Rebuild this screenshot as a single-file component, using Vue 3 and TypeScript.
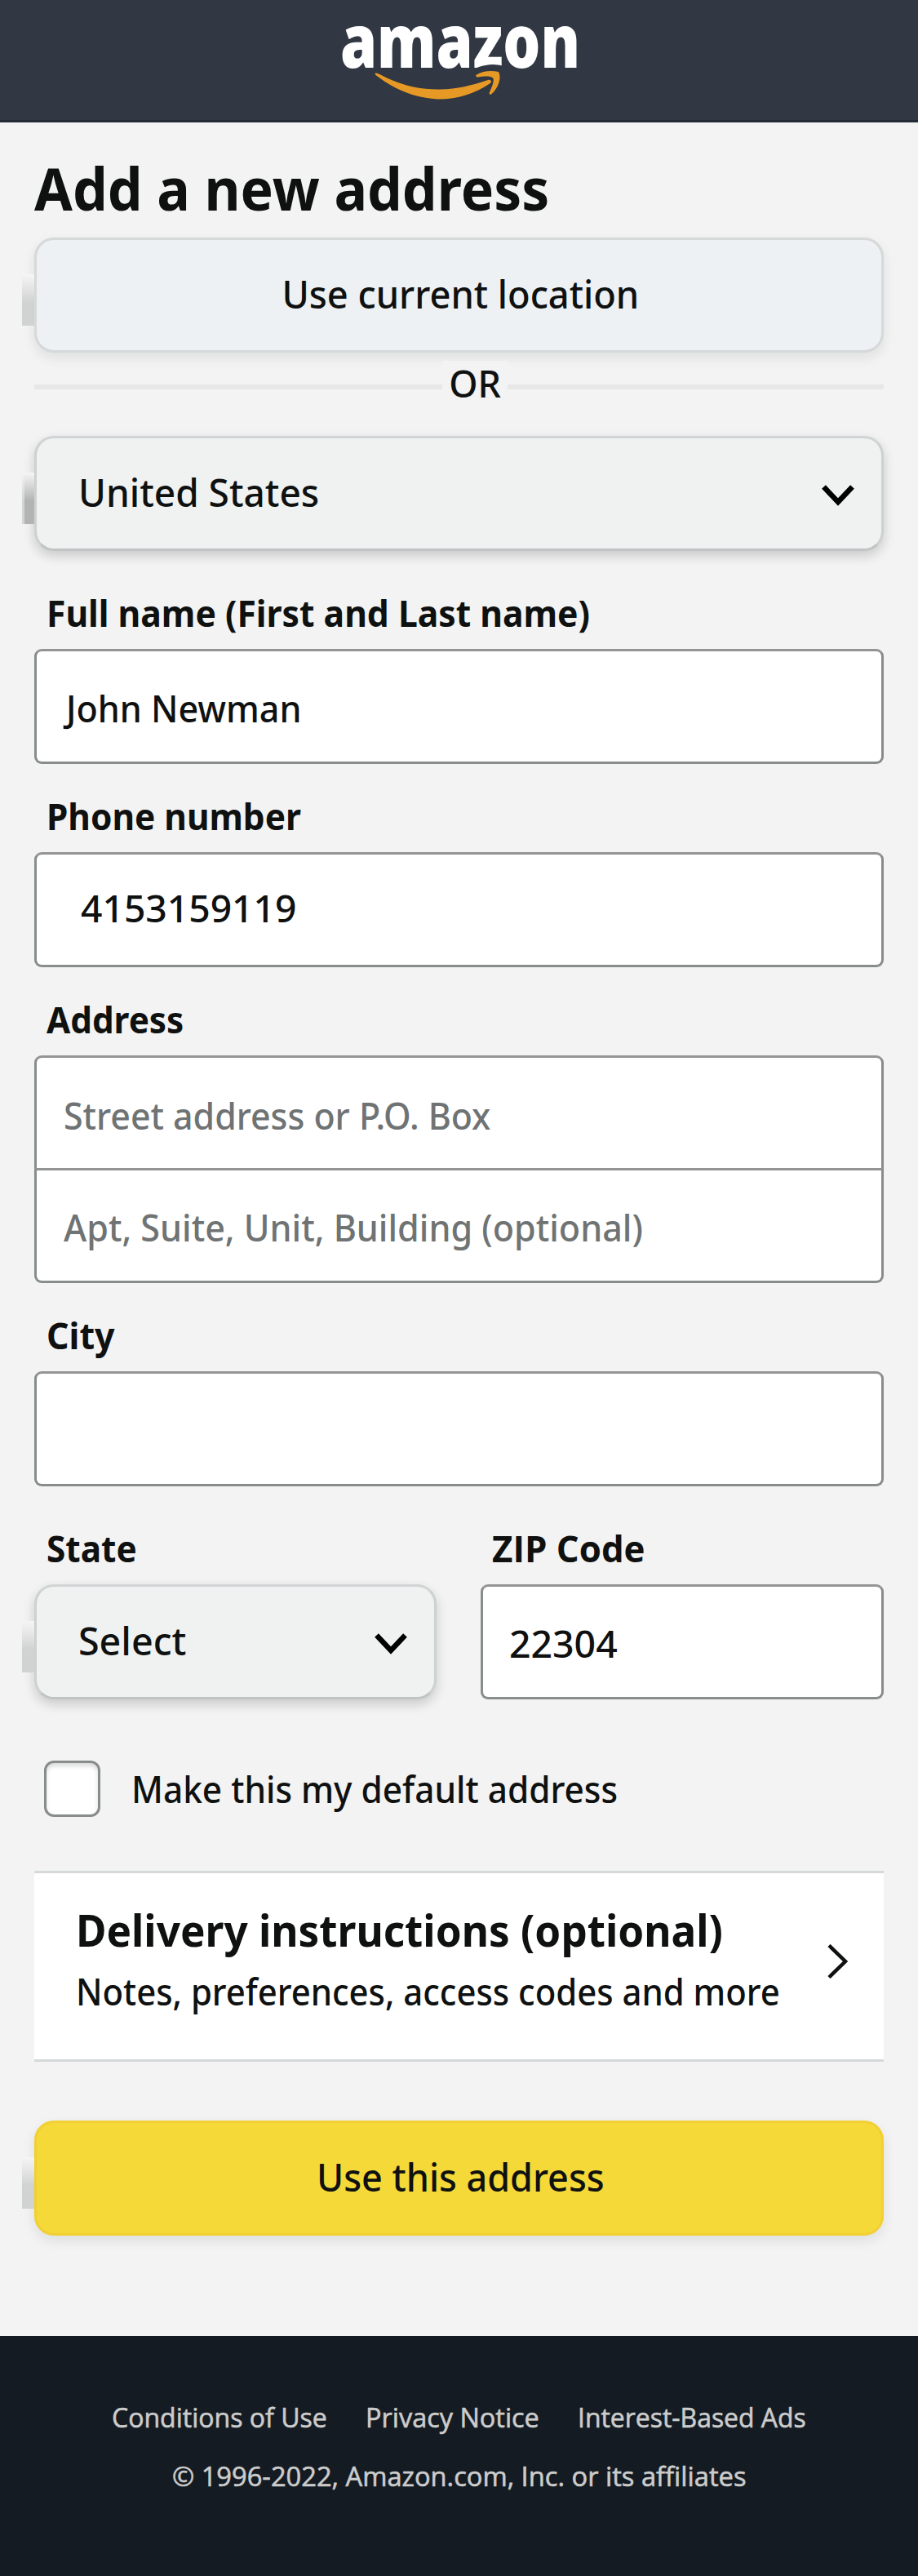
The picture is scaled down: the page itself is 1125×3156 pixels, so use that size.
<script setup lang="ts">
import type { Directive } from 'vue'

// Condenses or widens a run of text so that it takes up exactly the given width.
const vFit: Directive<HTMLElement, number> = {
  mounted(el, { value }) {
    el.style.transform = `scaleX(${value / el.offsetWidth})`
  },
}

interface FooterLink {
  label: string
  width: number
}

const footerLinks: FooterLink[] = [
  { label: 'Conditions of Use', width: 264 },
  { label: 'Privacy Notice', width: 213 },
  { label: 'Interest-Based Ads', width: 280 },
]
</script>

<template>
  <div class="page">
    <header class="header">
      <svg class="logo" width="310" height="147" viewBox="-5 0 310 147" role="img" aria-label="amazon">
        <text x="5" y="83" textLength="294" lengthAdjust="spacingAndGlyphs" class="logo-word">amazon</text>
        <path d="M174 84.500 Q192 78 208 84" fill="none" stroke="#313743" stroke-width="4" />
        <g transform="translate(2 0)" fill="#e69925">
          <path
            d="M49 90 C76 104 98 110 125 109.500 C147 109 163 105 184 98 C187 97 190 100 186 102.500 C168 115 145 122 122 121.500 C92 120 67 108 46.500 92 C44.500 90.500 46 88.500 49 90Z"
          />
          <path
            d="M170 91.500 C178 87 187 86 197 88 C201 95 197 108 188 115.500 C186 116.500 185 115 186 113 C190 104 192 98 190 95.500 C187 93 180 93 172 94.500 C169 94.500 168.500 92.500 170 91.500Z"
          />
        </g>
      </svg>
    </header>

    <main class="content">
      <h1 class="title"><span v-fit="631" class="fit">Add a new address</span></h1>

      <div class="button location"><span v-fit="438" class="fit center">Use current location</span></div>

      <div class="divider"><span class="divider-text"><span v-fit="64" class="fit center">OR</span></span></div>

      <div class="button select strong">
        <span v-fit="295" class="fit">United States</span>
        <svg class="chevron" width="42" height="28" viewBox="0 0 42 28"><path d="M3.500 3.500 L21 22 L38.500 3.500" /></svg>
      </div>

      <section class="field first">
        <div class="label"><span v-fit="666" class="fit">Full name (First and Last name)</span></div>
        <div class="input name"><span v-fit="288" class="fit">John Newman</span></div>
      </section>

      <section class="field">
        <div class="label"><span v-fit="312" class="fit">Phone number</span></div>
        <div class="input phone"><span v-fit="264" class="fit">4153159119</span></div>
      </section>

      <section class="field">
        <div class="label"><span v-fit="168" class="fit">Address</span></div>
        <div class="input top placeholder"><span v-fit="523" class="fit">Street address or P.O. Box</span></div>
        <div class="input bottom placeholder"><span v-fit="710" class="fit">Apt, Suite, Unit, Building (optional)</span></div>
      </section>

      <section class="field">
        <div class="label"><span v-fit="84" class="fit">City</span></div>
        <div class="input"></div>
      </section>

      <div class="columns">
        <section class="column state">
          <div class="label"><span v-fit="111" class="fit">State</span></div>
          <div class="button select">
            <span v-fit="132" class="fit">Select</span>
            <svg class="chevron" width="42" height="28" viewBox="0 0 42 28"><path d="M3.500 3.500 L21 22 L38.500 3.500" /></svg>
          </div>
        </section>
        <section class="column zip">
          <div class="label"><span v-fit="188" class="fit">ZIP Code</span></div>
          <div class="input"><span v-fit="133" class="fit">22304</span></div>
        </section>
      </div>

      <div class="default-row">
        <span class="checkbox"></span>
        <span v-fit="596" class="fit">Make this my default address</span>
      </div>

      <section class="instructions">
        <div class="instructions-text">
          <h2 class="instructions-title"><span v-fit="793" class="fit">Delivery instructions (optional)</span></h2>
          <p class="instructions-note"><span v-fit="863" class="fit">Notes, preferences, access codes and more</span></p>
        </div>
        <svg class="arrow" width="26" height="42" viewBox="0 0 26 42"><path d="M2 1.500 L22 21 L2 40.500" /></svg>
      </section>

      <div class="button submit"><span v-fit="353" class="fit center">Use this address</span></div>
    </main>

    <footer class="footer">
      <nav class="footer-links">
        <span v-for="link in footerLinks" :key="link.label" class="footer-link" :style="{ width: link.width + 'px' }">
          <span v-fit="link.width" class="fit">{{ link.label }}</span>
        </span>
      </nav>
      <div class="copyright"><span v-fit="703" class="fit center">© 1996-2022, Amazon.com, Inc. or its affiliates</span></div>
    </footer>
  </div>
</template>

<style>
body {
  background: #f3f3f3;
}
</style>

<style scoped>
.page {
  width: 1125px;
  height: 3156px;
  overflow: hidden;
  display: flex;
  flex-direction: column;
  background: #f3f3f3;
  color: #0f1111;
  font: 500 45px/60px 'Noto Sans', 'Open Sans', sans-serif;
}

.fit {
  display: inline-block;
  flex: none;
  white-space: nowrap;
  transform-origin: left center;
}

.fit.center {
  transform-origin: center;
}

.header {
  box-sizing: border-box;
  height: 150px;
  padding-right: 1px;
  display: flex;
  justify-content: center;
  background: #313743;
  border-bottom: 3px solid #232936;
}

.logo-word {
  font: 800 91px 'Open Sans', sans-serif;
  fill: #fff;
}

.content {
  flex: 1;
  padding: 44px 42px 0;
}

.title {
  margin: 0 0 25px;
  font-size: 72px;
  font-weight: 700;
  line-height: 72px;
}

.button {
  position: relative;
  box-sizing: border-box;
  height: 141px;
  padding: 0 0 4px 3px;
  display: flex;
  align-items: center;
  justify-content: center;
  border: 3px solid #d5d9d9;
  border-radius: 24px;
  box-shadow: 0 6px 15px rgba(15, 17, 17, 0.09);
  font-size: 48px;
}

/* Short shaded tab that sticks out of the left edge. */
.button::before {
  content: '';
  position: absolute;
  top: 42px;
  left: -18px;
  width: 15px;
  height: 63px;
  background: linear-gradient(#f5f5f5, #d1d3d2 55%);
}

.location {
  background: #edf1f3;
}

.divider {
  position: relative;
  height: 54px;
  margin: 10px 0 38px;
  display: flex;
  align-items: center;
  line-height: 56px;
  background: linear-gradient(#e7e7e7, #e7e7e7) 0 29px / 100% 6px no-repeat;
}

.divider-text {
  width: 80px;
  height: 54px;
  margin-left: 500px;
  display: flex;
  justify-content: center;
  background: #f3f3f3;
}

.select {
  padding-left: 51px;
  padding-right: 32px;
  justify-content: space-between;
  background: #f0f2f2;
  border-color: #d0d4d4 #cdd1d1 #c0c4c4;
  box-shadow: 0 6px 14px rgba(15, 17, 17, 0.18);
}

.strong::before {
  background: linear-gradient(#f5f5f5, #b2b4b3 55%);
  box-sizing: border-box;
  border-left: 3px solid rgba(243, 243, 243, 0.5);
}

.chevron {
  margin-top: 9px;
  fill: none;
  stroke: #000;
  stroke-width: 6.500;
}

.field {
  margin-top: 33px;
}

.field.first {
  margin-top: 45px;
}

.label {
  box-sizing: border-box;
  height: 60px;
  margin-bottom: 15px;
  padding: 1px 0 0 15px;
  font-weight: 700;
}

.input {
  box-sizing: border-box;
  height: 141px;
  padding: 4px 0 0 33px;
  display: flex;
  align-items: center;
  background: #fff;
  border: 3px solid #888c8c;
  border-top-color: #949494;
  border-radius: 9px;
}

.input.name {
  padding-left: 36px;
}

.input.phone {
  padding: 0 0 3px 54px;
}

.input.top {
  height: 138px;
  padding-top: 7px;
  border-bottom: 0;
  border-radius: 9px 9px 0 0;
}

.input.bottom {
  border-radius: 0 0 9px 9px;
}

.placeholder {
  color: #6f7373;
}

.columns {
  margin-top: 45px;
  display: flex;
  gap: 54px;
}

.state {
  width: 493px;
}

.zip {
  width: 494px;
}

.zip .label {
  padding-left: 14px;
  font-family: 'Open Sans', sans-serif;
}

.zip .input {
  padding-left: 32px;
}

.default-row {
  margin: 75px 0 66px;
  padding-left: 12px;
  display: flex;
  align-items: center;
  gap: 38px;
}

.checkbox {
  box-sizing: border-box;
  width: 69px;
  height: 69px;
  background: #fff;
  border: 3px solid #888c8c;
  border-radius: 12px;
  box-shadow: inset 0 4px 5px rgba(15, 17, 17, 0.15);
}

.instructions {
  box-sizing: border-box;
  height: 234px;
  margin-bottom: 72px;
  padding: 0 43px 0 51px;
  display: flex;
  align-items: center;
  justify-content: space-between;
  background: #fff;
  border: solid #d5d9d9;
  border-width: 3px 0;
}

.instructions-text {
  width: 870px;
  margin-top: -14px;
}

.instructions-title {
  margin: 0 0 16px;
  font-size: 54px;
  font-weight: 700;
  line-height: 60px;
}

.instructions-note {
  margin: 0;
}

.arrow {
  margin-top: -12px;
  fill: none;
  stroke: #0f1111;
  stroke-width: 4.500;
}

.submit {
  background: #f5d938;
  border-color: #f2cf33;
}

.footer {
  box-sizing: border-box;
  height: 294px;
  padding-top: 75px;
  background: #151b22;
  color: #ccc;
  font: 400 33.500px/48px 'Open Sans', sans-serif;
  -webkit-text-stroke: 0.600px #ccc;
}

.footer-links {
  display: flex;
  justify-content: center;
  gap: 47px;
  margin-bottom: 24px;
}

.copyright {
  display: flex;
  justify-content: center;
}
</style>
